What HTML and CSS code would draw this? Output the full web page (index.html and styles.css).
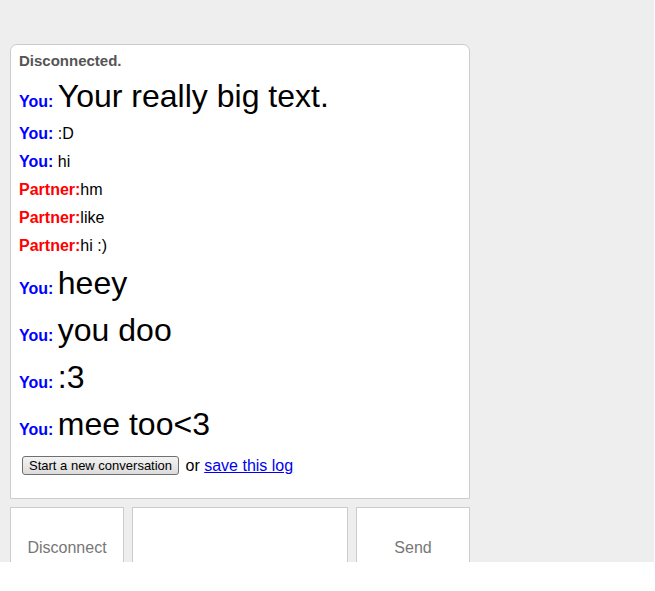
FILE: index.html
```html
<!DOCTYPE html>
<html>
  <head>
    <title>Chat log</title>
    <link rel="stylesheet" href="styles.css">
  </head>
  <body>
    <div class="page">
      <div class="chatbox">
        <p class="status">Disconnected.</p>
        <p class="logitem big"><strong class="you">You:</strong> <span>Your really big text.</span></p>
        <p class="logitem"><strong class="you">You:</strong> <span>:D</span></p>
        <p class="logitem"><strong class="you">You:</strong> <span>hi</span></p>
        <p class="logitem"><strong class="partner">Partner:</strong><span>hm</span></p>
        <p class="logitem"><strong class="partner">Partner:</strong><span>like</span></p>
        <p class="logitem"><strong class="partner">Partner:</strong><span>hi :)</span></p>
        <p class="logitem big"><strong class="you">You:</strong> <span>heey</span></p>
        <p class="logitem big"><strong class="you">You:</strong> <span>you doo</span></p>
        <p class="logitem big"><strong class="you">You:</strong> <span>:3</span></p>
        <p class="logitem big"><strong class="you">You:</strong> <span>mee too&lt;3</span></p>
        <p class="logitem actions"><button class="newchat">Start a new conversation</button> or <a href="#">save this log</a></p>
      </div>
      <div class="controls">
        <button class="side">Disconnect</button>
        <textarea class="msg"></textarea>
        <button class="side">Send</button>
      </div>
    </div>
  </body>
</html>
```

FILE: styles.css
```css
body {
  margin: 0;
  background: #fff;
  font-family: "Liberation Sans", Arial, sans-serif;
}

.page {
  width: 654px;
  height: 562px;
  overflow: hidden;
  background: #eeeeee;
  padding: 44px 0 0 10px;
  box-sizing: border-box;
}

.chatbox {
  width: 460px;
  box-sizing: border-box;
  background: #fff;
  border: 1px solid #cccccc;
  border-radius: 7px 7px 0 0;
  padding: 7px 8px 18px 8px;
}

.status {
  margin: 0 0 4px 0;
  font-size: 15px;
  font-weight: bold;
  color: #555;
}

.logitem {
  margin: 0;
  padding: 5px 0;
  font-size: 16px;
  color: #000;
}

.logitem.big span {
  font-size: 32px;
}

.you {
  color: #0000ff;
}

.partner {
  color: #ff0000;
}

.actions {
  padding-top: 8px;
}

.newchat {
  font-family: "Liberation Sans", Arial, sans-serif;
  font-size: 13px;
  color: #000;
  height: 19px;
  padding: 0 6px;
  margin: 0 2px 0 3px;
  border: 1px solid #707070;
  border-radius: 3px;
  background: linear-gradient(#f3f3f3, #dcdcdc);
  vertical-align: 1px;
}

.actions a {
  color: #0000ee;
}

.controls {
  display: flex;
  gap: 8px;
  margin-top: 8px;
  width: 460px;
}

.side {
  width: 114px;
  height: 82px;
  flex: none;
  background: #fff;
  border: 1px solid #cccccc;
  font-family: "Liberation Sans", Arial, sans-serif;
  font-size: 16px;
  color: #777;
}

.msg {
  width: 216px;
  height: 82px;
  box-sizing: border-box;
  flex: none;
  border: 1px solid #cccccc;
  margin: 0;
  resize: none;
}
```
